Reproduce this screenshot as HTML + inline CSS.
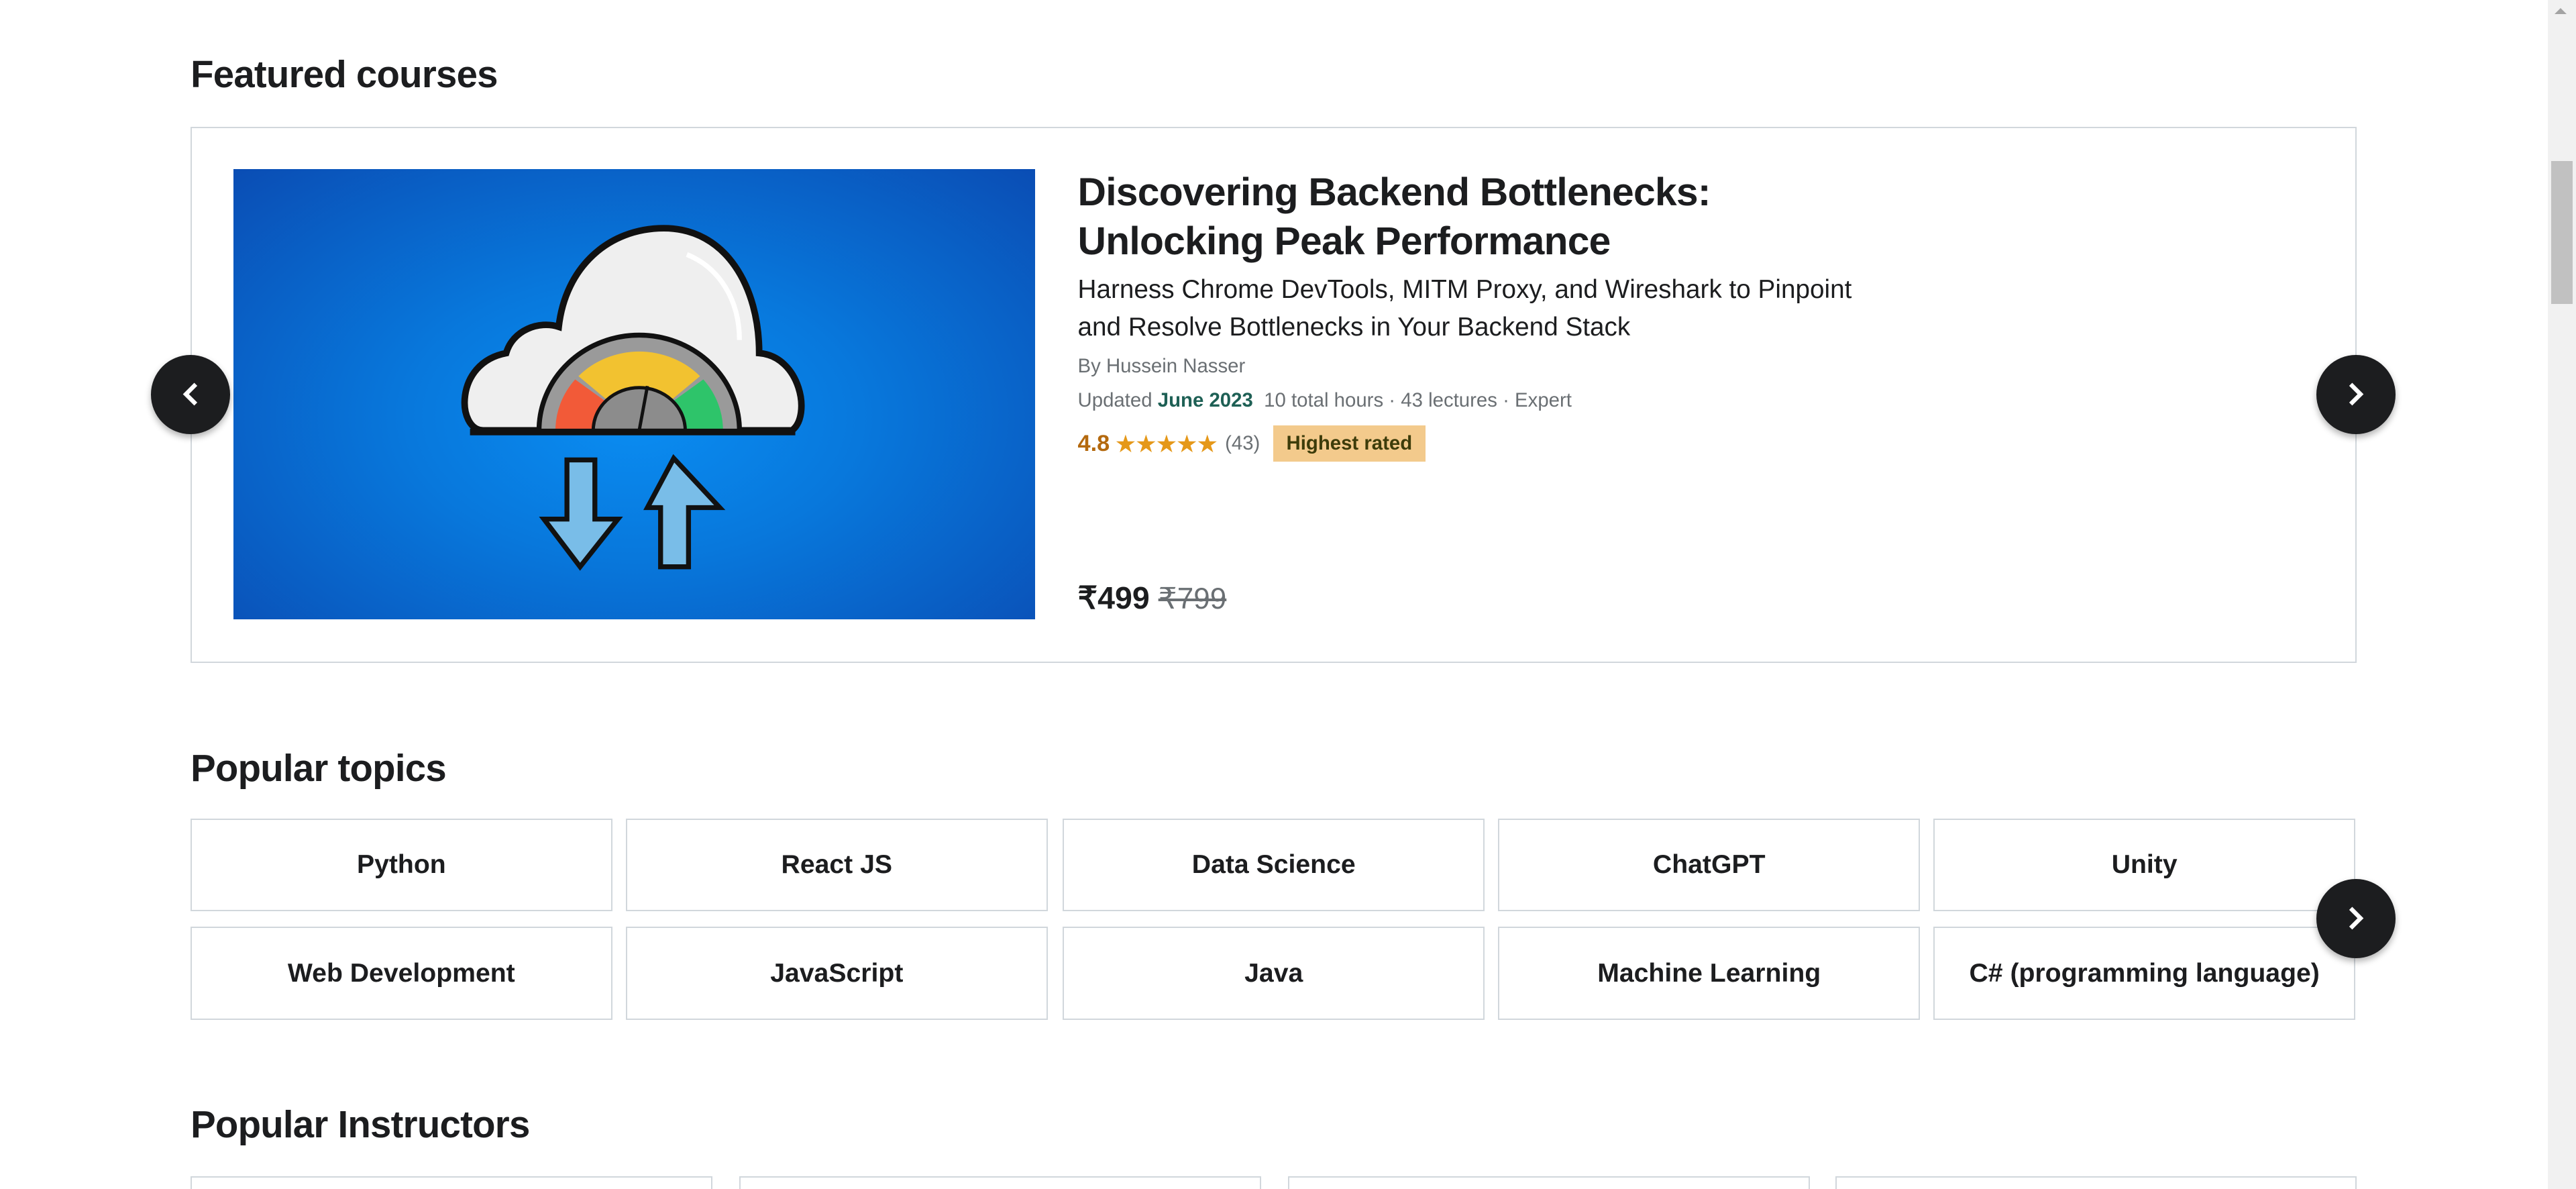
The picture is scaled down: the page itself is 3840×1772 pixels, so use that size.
<!DOCTYPE html>
<html><head><meta charset="utf-8">
<style>
html,body{margin:0;padding:0;background:#fff;overflow:hidden}
body{width:3840px;height:1772px}
#w{zoom:2.44898;position:relative;width:1568px;height:724px;font-family:"Liberation Sans",sans-serif;color:#1c1d1f}
.h{position:absolute;left:116px;font-size:23px;font-weight:bold;letter-spacing:-0.3px;margin:0}
.card{position:absolute;left:116px;top:77px;width:1317px;height:325px;border:1px solid #d1d7dc}
.img{position:absolute;left:142px;top:103px;width:488px;height:274px;background:radial-gradient(ellipse at 50% 55%,#0a8df2 0%,#0878dc 40%,#0a4db4 100%)}
.t{position:absolute;left:656px}
.btn{position:absolute;width:48px;height:48px;border-radius:50%;background:#1c1d1f;box-shadow:0 2px 4px rgba(0,0,0,.3)}
.btn svg{position:absolute;left:14px;top:14px}
.tp{position:absolute;width:255px;height:55px;border:1px solid #d1d7dc;display:flex;align-items:center;justify-content:center;font-weight:bold;font-size:16px}
.ib{position:absolute;top:716px;height:20px;border:1px solid #d1d7dc;border-bottom:none}
</style></head><body><div id="w">
<div class="h" style="top:32px">Featured courses</div>
<div class="card"></div>
<div class="img">
<svg width="488" height="274" viewBox="0 0 488 274">
<path d="M152 159 C136 159 134 118 166 112 C170 98 186 92 198 96 C202 60 228 36 262 36 C300 36 320 72 320 112 C345 114 352 150 340 159 Z" fill="#efefef" stroke="#111" stroke-width="4"/>
<path d="M276 52 C296 60 308 80 308 104" stroke="#fff" stroke-width="3" fill="none"/>
<path d="M186 159 A61 58 0 0 1 308 159" fill="#9a9a9a" stroke="#111" stroke-width="3"/>
<path d="M196 159 A51 48 0 0 1 208 128 L226 141 A28 26 0 0 0 219 159Z" fill="#f25a38"/>
<path d="M210 126 A51 48 0 0 1 284 126 L266 141 A28 26 0 0 0 228 141Z" fill="#f2c230"/>
<path d="M286 128 A51 48 0 0 1 298 159 L275 159 A28 26 0 0 0 268 141Z" fill="#2ec46a"/>
<path d="M219 159 A28 26 0 0 1 275 159Z" fill="#8c8c8c" stroke="#111" stroke-width="2"/>
<path d="M247 159 L252 132" stroke="#111" stroke-width="2"/>
<path d="M144 160 H342" stroke="#111" stroke-width="4"/>
<path d="M203 177 H220 V213 H234 L211 242 L189 213 H203Z" fill="#79bde8" stroke="#111" stroke-width="3"/>
<path d="M260 242 H277 V206 H296 L268 176 L252 206 H260Z" fill="#79bde8" stroke="#111" stroke-width="3"/>
</svg></div>
<div class="t" style="top:102px;font-size:24px;font-weight:bold;line-height:30px;letter-spacing:-0.3px">Discovering Backend Bottlenecks:<br>Unlocking Peak Performance</div>
<div class="t" style="top:165px;font-size:15.8px;line-height:23px">Harness Chrome DevTools, MITM Proxy, and Wireshark to Pinpoint<br>and Resolve Bottlenecks in Your Backend Stack</div>
<div class="t" style="top:216px;font-size:12px;color:#6a6f73">By Hussein Nasser</div>
<div class="t" style="top:237px;font-size:12px;color:#6a6f73">Updated <b style="color:#1e6055">June 2023</b>&nbsp; 10 total hours · 43 lectures · Expert</div>
<div class="t" style="top:259px;font-size:13px;display:flex;align-items:center">
<b style="color:#b4690e;font-size:14px">4.8</b><span style="color:#e59819;font-size:15px;margin-left:3px;letter-spacing:-1px">★★★★★</span><span style="color:#6a6f73;font-size:12px;margin-left:5px">(43)</span>
<span style="background:#f3ca8c;color:#3d3c0a;font-weight:bold;font-size:12px;padding:4px 8px;margin-left:8px">Highest rated</span></div>
<div class="t" style="top:353px;font-size:19px;font-weight:bold">₹499 <span style="font-weight:normal;color:#6a6f73;text-decoration:line-through;font-size:18px">₹799</span></div>
<div class="btn" style="left:92px;top:216px"><svg width="20" height="20" viewBox="0 0 20 20"><path d="M13 4 L7 10 L13 16" stroke="#fff" stroke-width="2.6" fill="none"/></svg></div>
<div class="btn" style="left:1410px;top:216px"><svg width="20" height="20" viewBox="0 0 20 20"><path d="M7 4 L13 10 L7 16" stroke="#fff" stroke-width="2.6" fill="none"/></svg></div>
<div class="h" style="top:454px">Popular topics</div>
<div class="tp" style="left:116px;top:498px">Python</div>
<div class="tp" style="left:381px;top:498px">React JS</div>
<div class="tp" style="left:647px;top:498px">Data Science</div>
<div class="tp" style="left:912px;top:498px">ChatGPT</div>
<div class="tp" style="left:1177px;top:498px">Unity</div>
<div class="tp" style="left:116px;top:564px">Web Development</div>
<div class="tp" style="left:381px;top:564px">JavaScript</div>
<div class="tp" style="left:647px;top:564px">Java</div>
<div class="tp" style="left:912px;top:564px">Machine Learning</div>
<div class="tp" style="left:1177px;top:564px">C# (programming language)</div>
<div class="btn" style="left:1410px;top:535px"><svg width="20" height="20" viewBox="0 0 20 20"><path d="M7 4 L13 10 L7 16" stroke="#fff" stroke-width="2.6" fill="none"/></svg></div>
<div class="h" style="top:671px">Popular Instructors</div>
<div class="ib" style="left:116px;width:316px"></div>
<div class="ib" style="left:450px;width:316px"></div>
<div class="ib" style="left:784px;width:316px"></div>
<div class="ib" style="left:1117px;width:316px"></div>
<div style="position:absolute;left:1551px;top:0;width:17px;height:724px;background:#f1f1f1"></div>
<div style="position:absolute;left:1553px;top:98px;width:13px;height:87px;background:#c1c1c1"></div>
<div style="position:absolute;left:1555px;top:5px;width:0;height:0;border-left:4px solid transparent;border-right:4px solid transparent;border-bottom:4px solid #a3a3a3"></div>
</div></body></html>
